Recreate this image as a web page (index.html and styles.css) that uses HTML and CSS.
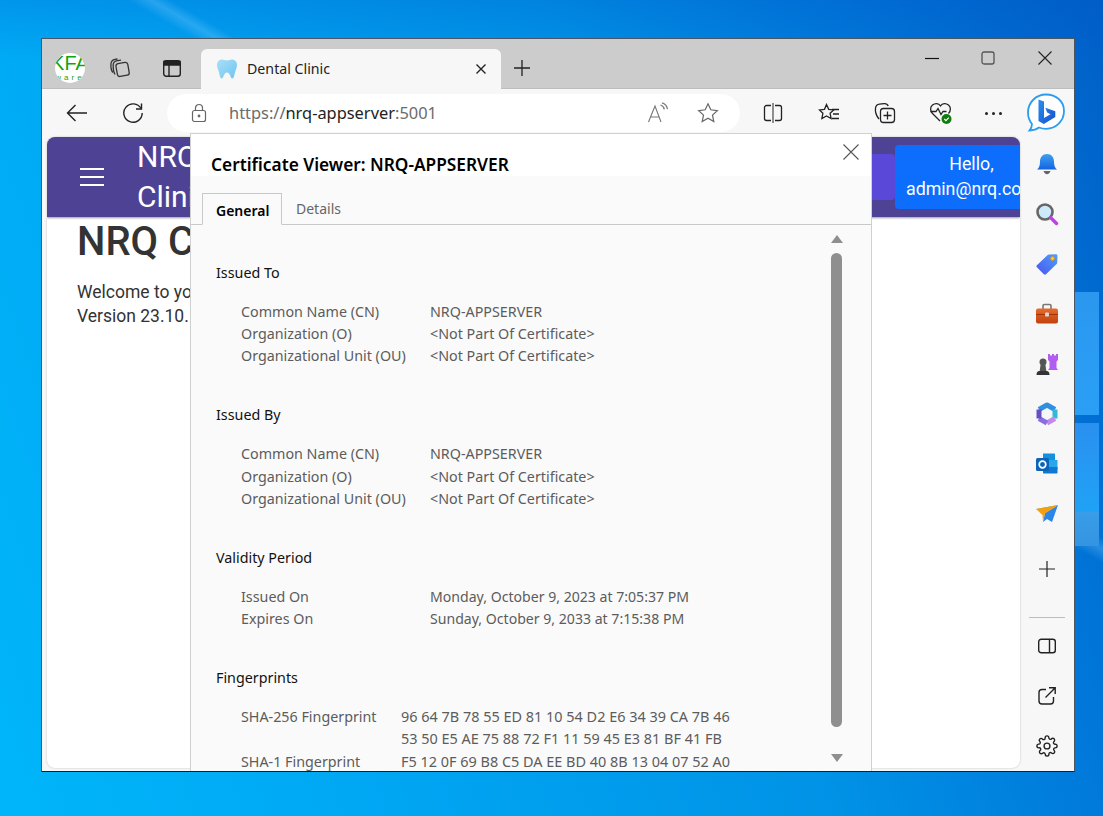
FILE: index.html
```html
<!DOCTYPE html>
<html lang="en">
<head>
<meta charset="utf-8">
<title>Certificate Viewer</title>
<link rel="stylesheet" href="styles.css">
</head>
<body>
<svg class="defs" width="0" height="0" aria-hidden="true">
  <defs>
    <linearGradient id="gBell" x1="0" y1="0" x2="0" y2="1"><stop offset="0" stop-color="#3fa0f0"/><stop offset="1" stop-color="#1464e0"/></linearGradient>
    <linearGradient id="gTag" x1="0" y1="1" x2="1" y2="0"><stop offset="0" stop-color="#4a54f0"/><stop offset="1" stop-color="#4fa0f8"/></linearGradient>
    <linearGradient id="gBox" x1="0" y1="0" x2="0" y2="1"><stop offset="0" stop-color="#e86a2a"/><stop offset="1" stop-color="#c2410f"/></linearGradient>
    <linearGradient id="gBing" x1="0" y1="0" x2="1" y2="1"><stop offset="0" stop-color="#2a8fee"/><stop offset="1" stop-color="#1450d0"/></linearGradient>
    <linearGradient id="gTooth" x1="0" y1="0" x2="1" y2="1"><stop offset="0" stop-color="#a8e0f8"/><stop offset="1" stop-color="#70c4f0"/></linearGradient>
  </defs>
</svg>
<div class="window">
  <header class="tabstrip">
    <div class="slot profile-slot">
      <div class="profile"><span class="profile-main">KFA</span><span class="profile-sub">ware</span></div>
    </div>
    <div class="slot w52">
      <svg width="22" height="22" viewBox="0 0 22 22" fill="none" stroke="#333" stroke-width="1.300"><rect x="7.500" y="6" width="12" height="13" rx="2.500" transform="rotate(-10 13 12)"/><path d="M6 17.500C4.500 15 4 12 4.200 7.500 4.400 5 6 4 8.500 3.600L12 3.200"/><path d="M3.800 15.500C2 13 1.600 10 2 6.500 2.300 4 3.600 2.800 6 2.400L8.500 2"/></svg>
    </div>
    <div class="slot w52">
      <svg width="20" height="20" viewBox="0 0 20 20" fill="none" stroke="#222" stroke-width="1.400"><rect x="1.700" y="2.700" width="16.600" height="15.600" rx="2.500"/><path d="M2 3.500h16v3.500H2z" fill="#222"/><path d="M7 7v11"/></svg>
    </div>
    <div class="tab">
      <svg class="tooth" width="22" height="22" viewBox="0 0 22 22"><path d="M6 1.500c2 0 3.400 1 5 1s3-1 5-1c3 0 5 2.400 5 5.500 0 3-1.500 5-2.200 8-.5 2.500-1 5.500-2.600 5.500-2 0-1.700-6-5.200-6s-3.200 6-5.200 6c-1.600 0-2.100-3-2.600-5.500C2.500 12 1 10 1 7c0-3.100 2-5.500 5-5.500z" fill="url(#gTooth)"/></svg>
      <span class="tab-title">Dental Clinic</span>
      <svg class="tab-close" width="12" height="12" viewBox="0 0 12 12" stroke="#222" stroke-width="1.400"><path d="M1.500 1.500l9 9M10.500 1.500l-9 9"/></svg>
    </div>
    <div class="slot w40">
      <svg width="18" height="18" viewBox="0 0 18 18" stroke="#222" stroke-width="1.300"><path d="M9 1v16M1 9h16"/></svg>
    </div>
    <div class="win-controls">
      <div class="slot w56">
        <svg width="14" height="14" viewBox="0 0 14 14" stroke="#111" stroke-width="1.200"><path d="M0 7.500h14"/></svg>
      </div>
      <div class="slot w56">
        <svg width="14" height="14" viewBox="0 0 14 14" fill="none" stroke="#555" stroke-width="1.300"><rect x="1" y="1" width="12" height="12" rx="2"/></svg>
      </div>
      <div class="slot w58">
        <svg width="14" height="14" viewBox="0 0 14 14" stroke="#222" stroke-width="1.100"><path d="M.5.500l13 13M13.500.500l-13 13"/></svg>
      </div>
    </div>
  </header>

  <nav class="toolbar">
    <div class="slot w56">
      <svg width="22" height="18" viewBox="0 0 22 18" fill="none" stroke="#222" stroke-width="1.400"><path d="M21 9H1.500M9.500 1L1.500 9l8 8"/></svg>
    </div>
    <div class="slot w55">
      <svg width="22" height="22" viewBox="0 0 22 22" fill="none" stroke="#222" stroke-width="1.400"><path d="M19 6.500A9.200 9.200 0 1 0 20.200 11"/><path d="M19.500 1.500v5.500h-5.500"/></svg>
    </div>
    <div class="address">
      <svg class="lock" width="20" height="20" viewBox="0 0 20 20" fill="none" stroke="#666" stroke-width="1.200"><rect x="3.500" y="7.500" width="13" height="11" rx="2"/><path d="M6.500 7.500V5a3.500 3.500 0 0 1 7 0v2.500"/><circle cx="10" cy="13" r=".8" fill="#444"/></svg>
      <span class="url"><span class="url-dim">https://</span>nrq-appserver<span class="url-dim">:5001</span></span>
      <div class="address-actions">
        <div class="slot w50">
          <svg width="22" height="22" viewBox="0 0 22 22" fill="none" stroke="#777" stroke-width="1.100"><path d="M1.500 20L8 4l6 16M3.500 15h9"/><path d="M13.500 3c2 .6 3.400 2.200 3.800 4.300M15 .8c3 .8 5 3.200 5.500 6.400" stroke-width="1.300"/></svg>
        </div>
        <div class="slot w50">
          <svg width="22" height="22" viewBox="0 0 22 22" fill="none" stroke="#666" stroke-width="1.200"><path d="M11 1.800l2.800 6 6.500.8-4.800 4.500 1.300 6.500-5.800-3.300-5.800 3.300 1.300-6.500L1.700 8.600l6.500-.8z"/></svg>
        </div>
      </div>
    </div>
    <div class="toolbar-actions">
      <div class="slot w56">
        <svg width="20" height="20" viewBox="0 0 20 20" fill="none" stroke="#222" stroke-width="1.300"><path d="M8 2.500H3.500a2 2 0 0 0-2 2v11a2 2 0 0 0 2 2H8M12 2.500h4.500a2 2 0 0 1 2 2v11a2 2 0 0 1-2 2H12"/><path d="M10 0v20" stroke="#555"/></svg>
      </div>
      <div class="slot w56">
        <svg width="22" height="20" viewBox="0 0 22 20" fill="none" stroke="#222" stroke-width="1.300"><path d="M8.500 1.500l2.200 4.800 5 .6-3.600 3.400 1 5.200-4.600-2.500-4.600 2.500 1-5.200L1.500 6.900l5-.6z"/><path d="M14 6.500h7M15 11h6M14 15.500h7"/></svg>
      </div>
      <div class="slot w56">
        <svg width="22" height="22" viewBox="0 0 22 22" fill="none" stroke="#222" stroke-width="1.300"><path d="M5 17C2.500 14 1 10 1.500 6c.3-2 1.800-3.500 4-3.800L10 1.600c2-.2 3.500.5 4.200 2.400"/><rect x="6.500" y="6.500" width="14" height="14" rx="3"/><path d="M13.500 9.500v8M9.500 13.500h8"/></svg>
      </div>
      <div class="slot w56 health">
        <svg width="24" height="24" viewBox="0 0 24 24" fill="none" stroke="#222" stroke-width="1.300"><path d="M11 20L3.500 12.500C1 10 1 6 3.500 4s6-2 8 .8c2-2.800 5.500-2.800 8-.8s2.500 6 0 8.500"/><path d="M1.500 10.500h5.500l2-3 3 6 2-3h3.500"/><circle cx="17.500" cy="18" r="5" fill="#107c10" stroke="none"/><path d="M15.300 18l1.600 1.600 2.900-2.900" stroke="#fff" stroke-width="1.200"/></svg>
      </div>
      <div class="slot w50 dots">
        <span class="dot"></span><span class="dot"></span><span class="dot"></span>
      </div>
      <div class="slot w50 bing">
        <svg width="40" height="40" viewBox="0 0 40 40"><path d="M20 1.500C10 1.500 2 9.500 2 19.500c0 4.500 1.500 8.500 4 11.500 0 1.500-.5 4-2.500 6.500 4-.3 7.500-1.500 9.500-3 2 .8 4.500 1.300 7 1.300 10 0 18-7.800 18-17.800S30 1.500 20 1.500z" fill="#fff" stroke="#2a9df0" stroke-width="1.800"/><path d="M12.500 6.500l5.500 1.900V25l6.500-3.800-3.300-1.600-1.900-4.800 10 3.500V24l-11.500 7-5.300-3z" fill="url(#gBing)"/></svg>
      </div>
    </div>
  </nav>

  <div class="below">
    <main class="page">
      <div class="app-header">
        <button class="burger" type="button" aria-label="Menu"><span></span><span></span><span></span></button>
        <div class="brand">NRQ Dental<br>Clinic</div>
        <div class="header-right">
          <div class="nav-btn"></div>
          <div class="hello"><div class="hello-text">Hello,<br>admin@nrq.com</div></div>
        </div>
      </div>
      <div class="page-body">
        <h1 class="page-title">NRQ Clinic</h1>
        <p class="page-text">Welcome to your clinic<br>Version 23.10.1</p>
      </div>
    </main>

    <aside class="sidebar">
      <div class="side-item">
        <svg width="24" height="24" viewBox="0 0 24 24"><path d="M12 2c4.500 0 7 3.500 7 7.500 0 4 1 6.500 3 8H2c2-1.500 3-4 3-8C5 5.500 7.500 2 12 2z" fill="url(#gBell)"/><path d="M8.500 19h7c-.5 2-2 3.200-3.500 3.200S9 21 8.500 19z" fill="#666"/></svg>
      </div>
      <div class="side-item">
        <svg width="24" height="24" viewBox="0 0 24 24"><circle cx="10" cy="10" r="7.500" fill="#cdeafc" stroke="#666" stroke-width="2.600"/><path d="M15.500 15.500l6 6" stroke="#c040e8" stroke-width="3.400" stroke-linecap="round"/></svg>
      </div>
      <div class="side-item">
        <svg width="24" height="24" viewBox="0 0 24 24"><path d="M14 2.500l7-.3c.8 0 1.500.7 1.500 1.500l-.3 7c0 .5-.2 1-.6 1.300L11 22.300c-.6.600-1.500.6-2.100 0l-7-7c-.6-.6-.6-1.500 0-2.100L12.700 3c.3-.3.800-.5 1.300-.5z" fill="url(#gTag)"/><circle cx="17.500" cy="6.500" r="2" fill="#f8c840" stroke="#d09020"/></svg>
      </div>
      <div class="side-item">
        <svg width="24" height="24" viewBox="0 0 24 24"><path d="M8 7V3.800C8 3 8.500 2.500 9.300 2.500h5.400c.8 0 1.300.5 1.300 1.300V7" fill="none" stroke="#777" stroke-width="1.600"/><rect x="1" y="6.500" width="22" height="15" rx="2" fill="url(#gBox)"/><path d="M1 12.500h22" stroke="#a03408"/><rect x="10" y="10.500" width="4" height="4" rx="1" fill="#d8d8d8"/></svg>
      </div>
      <div class="side-item">
        <svg width="24" height="24" viewBox="0 0 24 24"><path d="M13 2h2v1.500h2V2h2v1.500h2V2h2v6l-1.500 1.500v6.500L23 18H13l1.500-2V9.500L13 8z" fill="#b25cf0"/><circle cx="8" cy="10" r="3.500" fill="#555"/><path d="M5.500 13h5l.8 6h-6.600z" fill="#555"/><path d="M1.500 23c0-2.500 1-4 3-4h7c2 0 3 1.500 3 4z" fill="#333"/></svg>
      </div>
      <div class="side-item">
        <svg width="24" height="24" viewBox="0 0 24 24" fill="none" stroke-width="5" stroke-linejoin="round"><path d="M4 7.500L12 3l8 4.500" stroke="#2f8fe0"/><path d="M20 7.500v9" stroke="#35b8d8"/><path d="M20 16.500L12 21" stroke="#c08ae8"/><path d="M12 21l-8-4.500" stroke="#8a6ee0"/><path d="M4 16.500v-9" stroke="#6a4ec8"/></svg>
      </div>
      <div class="side-item">
        <svg width="24" height="24" viewBox="0 0 24 24"><path d="M8 1.500h11c.6 0 1 .4 1 1V8H8z" fill="#1490df"/><path d="M14 8h8.500v9.500H14z" fill="#28a8ea"/><path d="M8 15h14.500v5.500c0 .6-.4 1-1 1H9c-.6 0-1-.4-1-1z" fill="#0f78d4"/><rect x="1" y="6" width="13" height="13" rx="1.500" fill="#0a64b8"/><circle cx="7.500" cy="12.500" r="3.300" fill="none" stroke="#fff" stroke-width="1.700"/></svg>
      </div>
      <div class="side-item">
        <svg width="24" height="24" viewBox="0 0 24 24"><path d="M1 7l22-4-13 6z" fill="#4ab4f8"/><path d="M10 11L23 3l-6 17-5-3-4 3z" fill="#2a86ea"/><path d="M1 7l6.500 6L8 20l2-8.500L23 3z" fill="#f0a010"/></svg>
      </div>
      <div class="side-item side-plus">
        <svg width="16" height="16" viewBox="0 0 16 16" stroke="#222" stroke-width="1.200"><path d="M8 0v16M0 8h16"/></svg>
      </div>
      <div class="side-divider"></div>
      <div class="side-item">
        <svg width="20" height="20" viewBox="0 0 20 20" fill="none" stroke="#222" stroke-width="1.400"><rect x="1.700" y="3.200" width="16.600" height="13.600" rx="2.500"/><path d="M12.500 3v14"/></svg>
      </div>
      <div class="side-item">
        <svg width="20" height="20" viewBox="0 0 20 20" fill="none" stroke="#222" stroke-width="1.400"><path d="M9 3.500H5a3 3 0 0 0-3 3V15a3 3 0 0 0 3 3h8.500a3 3 0 0 0 3-3v-4"/><path d="M8.500 11.500L18 2M12 1.800h6.200V8"/></svg>
      </div>
      <div class="side-item">
        <svg width="22" height="22" viewBox="0 0 24 24" fill="none" stroke="#222" stroke-width="1.500"><circle cx="12" cy="12" r="3.200"/><path d="M19.400 15a1.650 1.650 0 0 0 .33 1.820l.06.06a2 2 0 1 1-2.830 2.830l-.06-.06a1.650 1.650 0 0 0-2.800 1.170V21a2 2 0 1 1-4 0v-.09a1.650 1.650 0 0 0-2.820-1.110l-.06.06a2 2 0 1 1-2.830-2.830l.06-.06A1.650 1.650 0 0 0 3.090 14H3a2 2 0 1 1 0-4h.09A1.650 1.650 0 0 0 4.200 7.180l-.06-.06a2 2 0 1 1 2.830-2.830l.06.06A1.650 1.650 0 0 0 10 3.090V3a2 2 0 1 1 4 0v.09a1.650 1.650 0 0 0 2.800 1.170l.06-.06a2 2 0 1 1 2.830 2.830l-.06.06A1.650 1.650 0 0 0 20.910 10H21a2 2 0 1 1 0 4h-.09a1.650 1.650 0 0 0-1.510 1z"/></svg>
      </div>
    </aside>
  </div>

  <section class="cert">
    <div class="cert-head">
      <h2 class="cert-title">Certificate Viewer: NRQ-APPSERVER</h2>
      <svg class="cert-close" width="16" height="16" viewBox="0 0 16 16" stroke="#555" stroke-width="1.100"><path d="M.5.500l15 15M15.500.500l-15 15"/></svg>
    </div>
    <div class="cert-tabs">
      <div class="cert-tab active">General</div>
      <div class="cert-tab">Details</div>
    </div>
    <div class="cert-body">
      <div class="cert-pane">
        <div class="group">
          <div class="group-title">Issued To</div>
          <div class="rows">
            <span>Common Name (CN)</span><span>NRQ-APPSERVER</span>
            <span>Organization (O)</span><span>&lt;Not Part Of Certificate&gt;</span>
            <span>Organizational Unit (OU)</span><span>&lt;Not Part Of Certificate&gt;</span>
          </div>
        </div>
        <div class="group">
          <div class="group-title">Issued By</div>
          <div class="rows">
            <span>Common Name (CN)</span><span>NRQ-APPSERVER</span>
            <span>Organization (O)</span><span>&lt;Not Part Of Certificate&gt;</span>
            <span>Organizational Unit (OU)</span><span>&lt;Not Part Of Certificate&gt;</span>
          </div>
        </div>
        <div class="group">
          <div class="group-title">Validity Period</div>
          <div class="rows">
            <span>Issued On</span><span class="when">Monday, October 9, 2023 at 7:05:37 PM</span>
            <span>Expires On</span><span class="when">Sunday, October 9, 2033 at 7:15:38 PM</span>
          </div>
        </div>
        <div class="group">
          <div class="group-title">Fingerprints</div>
          <div class="rows rows-fp">
            <span>SHA-256 Fingerprint</span><span class="hex">96 64 7B 78 55 ED 81 10 54 D2 E6 34 39 CA 7B 46</span>
            <span></span><span class="hex">53 50 E5 AE 75 88 72 F1 11 59 45 E3 81 BF 41 FB</span>
            <span>SHA-1 Fingerprint</span><span class="hex">F5 12 0F 69 B8 C5 DA EE BD 40 8B 13 04 07 52 A0</span>
          </div>
        </div>
      </div>
      <div class="scroll">
        <span class="arrow-up"></span>
        <span class="thumb"></span>
        <span class="arrow-down"></span>
      </div>
    </div>
  </section>
</div>
</body>
</html>
```

FILE: styles.css
```css
* { box-sizing: border-box; }
html, body { margin: 0; height: 816px; overflow: hidden; }
body {
  padding: 38px 0 0 41px;
  background-color: #0088e4;
  background-image:
    linear-gradient(#2b97ef, #2a9ff6),
    linear-gradient(#2a90f0, #1fa2f6),
    linear-gradient(#3a9de8, #3494e2),
    linear-gradient(30deg, transparent 770px, rgba(130,205,255,.3) 782px, transparent 792px),
    linear-gradient(180deg, rgba(0,80,200,.22) 0, transparent 60px),
    linear-gradient(70deg, #00b6fa 0%, #00a8f4 25%, #0092e6 60%, #0078da 80%, #0060c8 100%);
  background-repeat: no-repeat;
  background-size: 24px 123px, 24px 89px, 24px 34px, auto, auto, auto;
  background-position: 1075px 292px, 1075px 423px, 1075px 512px, 0 0, 0 0, 0 0;
  font-family: "Noto Sans", "Open Sans", sans-serif;
}
.defs { position: absolute; }
.window {
  position: relative;
  width: 1034px;
  height: 734px;
  border: 1px solid #4c5660;
  border-bottom-color: #123;
  background: #f7f7f7;
  overflow: hidden;
  display: flex;
  flex-direction: column;
}
.slot { display: flex; align-items: center; justify-content: center; flex: none; height: 40px; }
.w40 { width: 40px; }
.w50 { width: 50px; }
.w52 { width: 52px; }
.w55 { width: 55px; }
.w56 { width: 56px; }
.w58 { width: 58px; }

/* tab strip */
.tabstrip {
  display: flex;
  align-items: flex-end;
  flex: none;
  height: 50px;
  padding-left: 8px;
  background: #cccccc;
  border-bottom: 1px solid #bdbdbd;
}
.profile-slot { width: 40px; margin-right: 4px; }
.profile {
  width: 30px;
  height: 30px;
  border-radius: 50%;
  background: #fff;
  overflow: hidden;
  display: flex;
  flex-direction: column;
  align-items: center;
  color: #12a312;
  font-family: "Liberation Sans", sans-serif;
}
.profile-main { font-size: 20px; line-height: 21px; white-space: nowrap; flex: none; }
.profile-sub { font-size: 8px; line-height: 7px; letter-spacing: 3px; white-space: nowrap; flex: none; }
.tab {
  flex: none;
  width: 300px;
  height: 40px;
  margin: 0 1px 0 3px;
  background: #f7f7f7;
  border-radius: 6px 6px 0 0;
  display: flex;
  align-items: center;
  padding: 0 0 1px 15px;
  position: relative;
  top: 1px;
}
.tab-title { margin-left: 9px; font-size: 14.200px; line-height: 18px; color: #222; }
.tab-close { margin-left: auto; margin-right: 14px; }
.win-controls { margin-left: auto; display: flex; height: 40px; align-self: flex-start; margin-top: -1px; }

/* toolbar */
.toolbar { display: flex; align-items: center; flex: none; height: 44px; padding-left: 7px; background: #f7f7f7; }
.address {
  flex: none;
  width: 573px;
  height: 38px;
  margin: 4px 0 0 7px;
  border-radius: 19px;
  background: #fff;
  display: flex;
  align-items: center;
  padding: 0 7px 0 22px;
}
.toolbar .slot { margin-top: 4px; }
.address .slot { margin-top: 0; }
.url { margin: 0 0 2px 20px; font-size: 16.400px; color: #222; white-space: nowrap; }
.url-dim { color: #6b6b6b; }
.address-actions { margin-left: auto; display: flex; }
.toolbar-actions { display: flex; align-items: center; margin-left: 5px; }
.dots { gap: 4px; margin-left: -1px; }
.dot { width: 3px; height: 3px; border-radius: 50%; background: #222; }
.bing { margin-left: 3px; }

/* page area */
.below { flex: 1; display: flex; min-height: 0; padding: 4px 0 3px 5px; }
.page {
  flex: none;
  width: 973px;
  background: #fff;
  border-radius: 8px;
  overflow: hidden;
  box-shadow: 0 0 2px rgba(0,0,0,.25);
  font-family: Roboto, sans-serif;
}
.app-header {
  height: 80px;
  background: #4e4294;
  display: flex;
  align-items: center;
  box-shadow: 0 1px 2px rgba(0,0,0,.4);
  color: #fff;
  position: relative;
}
.burger {
  width: 24px; height: 18px; margin-left: 33px; padding: 0; border: 0; background: none;
  display: flex; flex-direction: column; justify-content: space-between;
}
.burger span { display: block; height: 2px; background: #fff; }
.brand { margin-left: 33px; font-size: 30px; line-height: 40px; white-space: nowrap; }
.header-right { margin-left: auto; display: flex; align-items: center; flex: none; }
.nav-btn { width: 60px; height: 46px; background: #5a48d8; border-radius: 4px; }
.hello {
  flex: none;
  width: 125px;
  height: 64px;
  background: #0d6efd;
  border-radius: 4px 0 0 4px;
  padding: 6px 0 0 11px;
  font-size: 17.800px;
  line-height: 25px;
  overflow: hidden;
}
.hello-text { width: max-content; text-align: center; }
.page-body { padding: 0 30px; color: #333; }
.page-title { margin: 1px 0 0; font-size: 40px; line-height: 48px; font-weight: 500; }
.page-text { margin: 14px 0 0; font-size: 17.500px; line-height: 24px; }

/* sidebar */
.sidebar { flex: 1; display: flex; flex-direction: column; align-items: center; margin-top: 2px; }
.side-item { flex: none; width: 100%; height: 50px; display: flex; align-items: center; justify-content: center; }
.side-plus { margin-top: 5px; }
.side-divider { flex: none; width: 36px; height: 1px; margin: 23px 0 3px; background: #bdbdbd; }

/* certificate dialog */
.cert {
  position: absolute;
  left: 148px;
  top: 94px;
  width: 682px;
  height: 640px;
  background: #fafafa;
  border: 1px solid #d0d0d0;
  border-bottom: 0;
  display: flex;
  flex-direction: column;
  color: #000;
}
.cert-head { flex: none; height: 42px; background: #fff; position: relative; padding: 21px 0 0 20px; }
.cert-title { margin: 0; font-size: 17.300px; line-height: 20px; font-weight: 600; white-space: nowrap; }
.cert-close { position: absolute; right: 12px; top: 10px; }
.cert-tabs { flex: none; height: 49px; display: flex; align-items: flex-end; padding-left: 11px; border-bottom: 1px solid #c8c8c8; }
.cert-tab { height: 32px; padding: 0 14px; font-size: 14px; line-height: 33px; color: #666; }
.cert-tab.active { width: 80px; margin-bottom: -1px; border: 1px solid #c8c8c8; border-bottom-color: #fafafa; background: #fafafa; color: #000; font-weight: 600; padding: 0 13px; }
.cert-body { flex: 1; min-height: 0; display: flex; }
.cert-pane { flex: 1; min-width: 0; overflow: hidden; padding: 36.600px 0 0 25px; font-size: 14.300px; line-height: 22.400px; }
.group { margin-bottom: 36.400px; }
.group-title { margin-bottom: 16.600px; color: #111; }
.rows { display: grid; grid-template-columns: 189px 1fr; padding-left: 25px; color: #5c5c5c; white-space: nowrap; }
.rows-fp { grid-template-columns: 160px 1fr; }
.when { font-size: 14.100px; }
.hex { font-size: 14.450px; }
.scroll { flex: none; width: 11px; margin-right: 29px; padding-top: 10px; display: flex; flex-direction: column; align-items: center; }
.arrow-up { width: 0; height: 0; border: 6px solid transparent; border-top: 0; border-bottom: 8px solid #8f8f8f; }
.arrow-down { width: 0; height: 0; margin-top: 27px; border: 6px solid transparent; border-bottom: 0; border-top: 8px solid #8f8f8f; }
.thumb { width: 11px; height: 474px; margin-top: 10px; border-radius: 6px; background: #8f8f8f; }
```
